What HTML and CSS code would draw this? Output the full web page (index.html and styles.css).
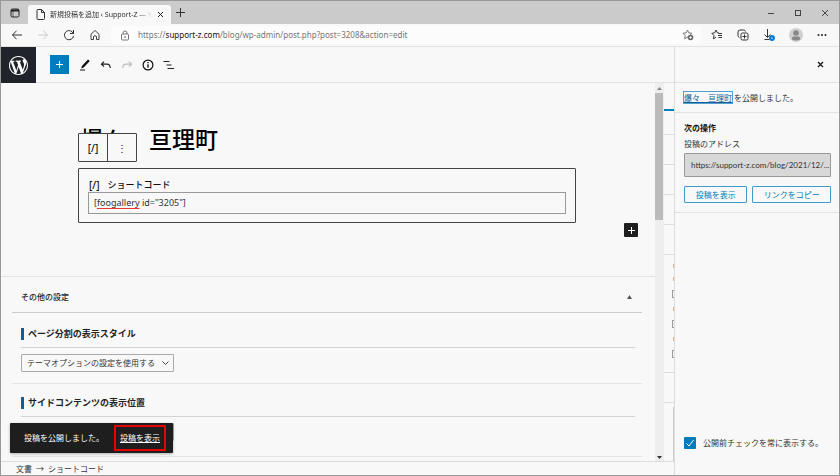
FILE: index.html
```html
<!DOCTYPE html>
<html lang="ja">
<head>
    <meta charset="UTF-8">
    <title>新規投稿を追加 ‹ Support-Z</title>
    <link rel="stylesheet" href="styles.css">
</head>
<body>
    <div class="window">
        <!-- Browser tabs -->
        <div class="tab-bar">
            <button class="icon-btn tab-menu" aria-label="タブ操作">
                <svg width="10" height="10" viewBox="0 0 10 10"><rect x="1" y="1" width="8" height="8" rx="1.5" fill="none" stroke="#222"/><path d="M1 2.5h8" stroke="#222" stroke-width="2"/><path d="M3 3v6" stroke="#222" stroke-width=".6"/></svg>
            </button>
            <div class="tab">
                <svg width="9" height="11" viewBox="0 0 9 11" fill="none" stroke="#333"><path d="M1 1.5q0-1 1-1h3.5l3 3v6q0 1-1 1H2q-1 0-1-1zM5.500 .5v3h3"/></svg>
                <span class="tab-title">新規投稿を追加 ‹ Support-Z — W</span>
                <button class="icon-btn" aria-label="タブを閉じる">
                    <svg width="7" height="7" viewBox="0 0 7 7" stroke="#222"><path d="M1 1l5 5M6 1L1 6"/></svg>
                </button>
            </div>
            <button class="icon-btn new-tab" aria-label="新しいタブ">
                <svg width="9" height="9" viewBox="0 0 9 9" stroke="#333"><path d="M4.500 0v9M0 4.500h9"/></svg>
            </button>
            <div class="window-controls">
                <button class="icon-btn" aria-label="最小化"><svg width="8" height="8" viewBox="0 0 8 8" stroke="#444"><path d="M1 4.500h6"/></svg></button>
                <button class="icon-btn" aria-label="最大化"><svg width="8" height="8" viewBox="0 0 8 8" stroke="#444" fill="none"><rect x="1.500" y="1.500" width="5" height="5"/></svg></button>
                <button class="icon-btn" aria-label="閉じる"><svg width="8" height="8" viewBox="0 0 8 8" stroke="#444"><path d="M1 1l6 6M7 1L1 7"/></svg></button>
            </div>
        </div>

        <!-- Address bar -->
        <div class="nav-bar">
            <div class="nav-buttons">
                <button class="icon-btn" aria-label="戻る"><svg width="12" height="12" viewBox="0 0 12 12" fill="none" stroke="#333"><path d="M11 6H1.500M5.500 1.800L1.500 6l4 4.200"/></svg></button>
                <button class="icon-btn" aria-label="進む"><svg width="12" height="12" viewBox="0 0 12 12" fill="none" stroke="#ccc"><path d="M1 6h9.500M6.500 1.800l4 4.200-4 4.200"/></svg></button>
                <button class="icon-btn" aria-label="更新"><svg width="12" height="12" viewBox="0 0 12 12" fill="none" stroke="#333"><path d="M10.500 5A4.600 4.600 0 1 0 10.600 6.800M10.500 1v3.500H7"/></svg></button>
                <button class="icon-btn" aria-label="ホーム"><svg width="12" height="12" viewBox="0 0 12 12" fill="none" stroke="#444"><path d="M2 5.200L6 1.500l4 3.700v5.300H7.500V8q0-1.300-1.500-1.300T4.500 8v2.500H2z" stroke-linejoin="round"/></svg></button>
            </div>
            <div class="address">
                <svg width="10" height="11" viewBox="0 0 10 11" fill="none" stroke="#777"><rect x="1.500" y="4" width="7" height="6" rx="1"/><path d="M3 4V3q0-2 2-2t2 2v1"/><circle cx="5" cy="7" r=".5"/></svg>
                <span class="url">https://<b>support-z.com</b>/blog/wp-admin/post.php?post=3208&amp;action=edit</span>
                <button class="icon-btn" aria-label="お気に入りに追加"><svg width="12" height="12" viewBox="0 0 12 12" fill="none" stroke="#777"><path d="M5.500 1l1.300 2.900 3.200.4-2.300 2.200.6 3.200-2.800-1.500-2.900 1.500.6-3.200L1 4.300l3.200-.4z"/><circle cx="8.500" cy="8.500" r="2.800" fill="#666" stroke="none"/><path d="M8.500 7v3M7 8.500h3" stroke="#fff" stroke-width=".8"/></svg></button>
            </div>
            <div class="nav-tools">
                <button class="icon-btn" aria-label="お気に入り"><svg width="12" height="12" viewBox="0 0 12 12" fill="none" stroke="#333"><path d="M8 4L6.400 3.800 5 1 3.700 3.900.8 4.300 3 6.500l-.6 3.300L5 8.300M7.500 4.500H11M7 6.500h4M7.500 8.500H11"/></svg></button>
                <button class="icon-btn" aria-label="コレクション"><svg width="12" height="12" viewBox="0 0 12 12" fill="none" stroke="#333"><rect x="4" y="4" width="7" height="7" rx="1.500"/><path d="M2.500 8.500Q1 8 1 6.500V3q0-2 2-2h3.500Q8.200 1 8.500 2.500M7.500 5.500v4M5.500 7.500h4"/></svg></button>
                <button class="icon-btn" aria-label="ダウンロード"><svg width="12" height="12" viewBox="0 0 12 12" fill="none" stroke="#333"><path d="M4.500 0v8M1.500 5.500l3 3 3-3M1.500 10.500h5"/><circle cx="9" cy="9" r="2.900" fill="#0078d4" stroke="none"/><circle cx="9" cy="9" r=".7" fill="#fff" stroke="none"/></svg></button>
                <button class="icon-btn" aria-label="プロフィール"><svg width="14" height="14" viewBox="0 0 14 14"><circle cx="7" cy="7" r="7" fill="#d0d0d0"/><circle cx="7" cy="5" r="2.800" fill="#888"/><path d="M2.800 11.500q0-3 2-3h4.400q2 0 2 3-4.200 2-8.400 0" fill="#888"/></svg></button>
                <button class="icon-btn" aria-label="設定など"><svg width="10" height="4" viewBox="0 0 10 4" fill="#222"><circle cx="1.500" cy="2" r="1"/><circle cx="5" cy="2" r="1"/><circle cx="8.500" cy="2" r="1"/></svg></button>
            </div>
        </div>

        <div class="page">
            <div class="editor">
                <header class="editor-header">
                    <a class="wp-logo" href="#" aria-label="WordPress">
                        <svg width="19" height="19" viewBox="0 0 20 20" fill="#fff"><path d="M20 10c0-5.510-4.490-10-10-10C4.480 0 0 4.490 0 10c0 5.520 4.480 10 10 10 5.510 0 10-4.480 10-10zM7.780 15.370L4.370 6.220c.55-.02 1.170-.08 1.170-.08.5-.06.44-1.130-.06-1.110 0 0-1.450.11-2.370.11-.18 0-.37 0-.58-.01C4.120 2.690 6.870 1.110 10 1.110c2.330 0 4.450.87 6.050 2.340-.68-.11-1.650.39-1.650 1.580 0 .74.45 1.360.9 2.100.35.61.55 1.360.55 2.460 0 1.490-1.400 5-1.400 5l-3.030-8.370c.54-.02.82-.17.82-.17.5-.05.44-1.250-.06-1.220 0 0-1.440.12-2.380.12-.87 0-2.330-.12-2.330-.12-.5-.03-.56 1.200-.06 1.220l.92.08 1.260 3.410zM17.410 10c.24-.64.74-1.870.43-4.250.7 1.290 1.050 2.710 1.050 4.250 0 3.290-1.730 6.240-4.400 7.780.97-2.590 1.940-5.200 2.920-7.780zM6.100 18.090C3.120 16.650 1.110 13.530 1.110 10c0-1.300.23-2.480.72-3.590C3.250 10.300 4.670 14.200 6.100 18.090zm4.030-6.630l2.580 6.980c-.86.29-1.760.45-2.710.45-.79 0-1.570-.11-2.290-.33.810-2.380 1.620-4.740 2.420-7.100z"/></svg>
                    </a>
                    <div class="editor-tools">
                        <button class="icon-btn add-btn" aria-label="ブロックを追加"><svg width="7" height="7" viewBox="0 0 7 7" stroke="#fff"><path d="M3.500 0v7M0 3.500h7"/></svg></button>
                        <button class="icon-btn" aria-label="編集"><svg width="12" height="12" viewBox="0 0 12 12" fill="#111"><path d="M9 .5L10.800 2 4.700 8.600l-2.500.8.7-2.500zM1 10.500h5v1H1z"/></svg></button>
                        <button class="icon-btn" aria-label="元に戻す"><svg width="12" height="12" viewBox="0 0 12 12" fill="none" stroke="#222" stroke-width="1.200"><path d="M4 2.700L1.500 5.200 4 7.700M1.500 5.200H7q3 0 3.300 3.800"/></svg></button>
                        <button class="icon-btn" aria-label="やり直す"><svg width="12" height="12" viewBox="0 0 12 12" fill="none" stroke="#bbb" stroke-width="1.200"><path d="M8 2.700l2.500 2.500L8 7.700M10.500 5.200H5Q2 5.200 1.700 9"/></svg></button>
                        <button class="icon-btn" aria-label="詳細"><svg width="12" height="12" viewBox="0 0 12 12" fill="none" stroke="#111"><circle cx="6" cy="6" r="4.900" stroke-width="1.200"/><path d="M6 5.200v3.600M6 3v1.200" stroke-width="1.300"/></svg></button>
                        <button class="icon-btn" aria-label="リスト表示"><svg width="12" height="12" viewBox="0 0 12 12" stroke="#222"><path d="M.5 2.500h6M3.500 6h5M4.500 9.500h6.500" stroke-width="1.200"/></svg></button>
                    </div>
                </header>

                <div class="editor-main">
                    <main class="content">
                        <div class="canvas">
                            <h1 class="post-title">爆々　亘理町</h1>
                            <div class="block">
                                <div class="block-toolbar">
                                    <button class="toolbar-btn">[/]</button>
                                    <button class="toolbar-btn" aria-label="オプション">⋮</button>
                                </div>
                                <label class="block-label" for="shortcode"><span>[/]</span>ショートコード</label>
                                <div class="shortcode" id="shortcode" role="textbox" contenteditable="true" spellcheck="false">[<span class="misspelled">foogallery</span> id="3205"]</div>
                            </div>
                            <button class="icon-btn inserter" aria-label="ブロックを追加"><svg width="9" height="9" viewBox="0 0 9 9" stroke="#fff"><path d="M4.500 1v7M1 4.500h7"/></svg></button>
                        </div>

                        <div class="metabox">
                            <div class="metabox-header">
                                <h2>その他の設定</h2>
                                <button class="icon-btn" aria-label="パネルを切り替え"><svg width="5" height="4" viewBox="0 0 5 4" fill="#555"><path d="M2.500 0L5 4H0z"/></svg></button>
                            </div>
                            <section class="option">
                                <h3><label for="page-style">ページ分割の表示スタイル</label></h3>
                                <div class="select-wrap">
                                    <select id="page-style"><option>テーマオプションの設定を使用する</option></select>
                                </div>
                            </section>
                            <section class="option">
                                <h3><label for="side-position">サイドコンテンツの表示位置</label></h3>
                                <div class="select-wrap">
                                    <select id="side-position"><option>テーマオプションの設定を使用する</option></select>
                                </div>
                            </section>
                        </div>
                    </main>

                    <div class="scrollbar">
                        <svg width="5" height="4" viewBox="0 0 5 4" fill="#888"><path d="M2.500 0L5 3H0z"/></svg>
                        <div class="scroll-track"><div class="scroll-thumb"></div></div>
                        <svg width="5" height="4" viewBox="0 0 5 4" fill="#333"><path d="M2.500 4L5 1H0z"/></svg>
                    </div>

                    <!-- Settings sidebar, mostly covered by the publish panel -->
                    <div class="settings">
                        <div class="settings-row settings-tab"></div>
                        <div class="settings-row settings-short"></div>
                        <div class="settings-row"></div>
                        <div class="settings-row"></div>
                        <div class="settings-row"></div>
                        <div class="settings-row"></div>
                        <div class="settings-row settings-list">
                            <i class="link-edge"></i>
                            <i class="link-edge"></i>
                            <i class="box-edge"></i>
                            <i class="link-edge"></i>
                            <i class="box-edge"></i>
                            <i class="link-edge"></i>
                            <i class="box-edge"></i>
                        </div>
                        <div class="settings-row"></div>
                        <div class="settings-rest"></div>
                    </div>
                </div>

                <footer class="breadcrumb">
                    <span>文書</span>
                    <span>→</span>
                    <span>ショートコード</span>
                </footer>

                <div class="snackbar">
                    <span>投稿を公開しました。</span>
                    <a href="#">投稿を表示</a>
                </div>
            </div>

            <aside class="publish-panel">
                <div class="panel-header">
                    <button class="icon-btn" aria-label="パネルを閉じる"><svg width="7" height="7" viewBox="0 0 7 7" stroke="#111" stroke-width="1.200"><path d="M1 1l5 5M6 1L1 6"/></svg></button>
                </div>
                <p class="published"><a href="#">爆々　亘理町</a>を公開しました。</p>
                <div class="next-steps">
                    <h2>次の操作</h2>
                    <label for="post-url">投稿のアドレス</label>
                    <input type="text" id="post-url" value="https://support-z.com/blog/2021/12/..." readonly>
                    <div class="panel-buttons">
                        <button class="btn view-btn">投稿を表示</button>
                        <button class="btn copy-btn">リンクをコピー</button>
                    </div>
                </div>
                <div class="panel-footer">
                    <input type="checkbox" id="precheck" checked>
                    <label for="precheck">公開前チェックを常に表示する。</label>
                </div>
            </aside>
        </div>
    </div>
</body>
</html>
```
FILE: styles.css
```css
* {
    box-sizing: border-box;
}
body {
    margin: 0;
    font-family: 'Noto Sans', 'Noto Sans CJK JP', sans-serif;
    font-size: 8px;
    line-height: 12px;
    color: #333;
    background-color: #f8f8f8;
}
h1, h2, h3, p {
    margin: 0;
}
button, input, select {
    font-family: inherit;
    font-size: inherit;
    line-height: inherit;
    color: inherit;
    margin: 0;
}
svg {
    display: block;
    flex-shrink: 0;
}
.window {
    display: flex;
    flex-direction: column;
    height: 100vh;
    border: 1px solid #999;
    overflow: hidden;
}
.icon-btn {
    display: flex;
    align-items: center;
    justify-content: center;
    flex-shrink: 0;
    padding: 0;
    border: none;
    background: none;
}

/* Browser chrome */
.tab-bar {
    display: flex;
    align-items: center;
    height: 23px;
    flex-shrink: 0;
    background-color: #cbcbcb;
}
.tab-menu {
    width: 27px;
}
.tab {
    display: flex;
    align-items: center;
    align-self: flex-end;
    gap: 5px;
    width: 143px;
    height: 19px;
    padding: 0 7px 0 8px;
    border-radius: 3px 3px 0 0;
    background-color: #f8f8f8;
}
.tab-title {
    flex: 1;
    min-width: 0;
    font-size: 7px;
    white-space: nowrap;
    -webkit-mask-image: linear-gradient(to right, #000 85%, transparent);
    mask-image: linear-gradient(to right, #000 85%, transparent);
}
.new-tab {
    width: 19px;
}
.window-controls {
    display: flex;
    gap: 19px;
    margin-left: auto;
    padding-right: 10px;
}
.nav-bar {
    display: flex;
    align-items: center;
    height: 23px;
    flex-shrink: 0;
    border-bottom: 1px solid #e2e2e2;
}
.nav-buttons {
    display: flex;
    gap: 14px;
    padding: 0 10px;
}
.address {
    display: flex;
    align-items: center;
    gap: 8px;
    flex: 1;
    height: 18px;
    padding: 0 7px 0 9px;
    border-radius: 3px;
    background-color: #fcfcfc;
}
.url {
    flex: 1;
    color: #777;
    white-space: nowrap;
}
.url b {
    font-weight: 400;
    color: #111;
}
.nav-tools {
    display: flex;
    align-items: center;
    gap: 14px;
    padding: 0 12px 0 10px;
}

/* Editor */
.page {
    display: flex;
    flex: 1;
    min-height: 0;
}
.editor {
    position: relative;
    display: flex;
    flex-direction: column;
    flex: 1;
    min-width: 0;
}
.editor-header {
    display: flex;
    height: 36px;
    flex-shrink: 0;
    border-bottom: 1px solid #e2e2e2;
}
.wp-logo {
    display: flex;
    align-items: center;
    justify-content: center;
    width: 35px;
    height: 36px;
    background-color: #20242a;
}
.editor-tools {
    display: flex;
    align-items: center;
    gap: 9px;
    padding-left: 14px;
}
.editor-tools .icon-btn {
    width: 12px;
    height: 19px;
}
.editor-tools .add-btn {
    width: 19px;
    margin-right: 1px;
    background-color: #007cba;
}
.editor-main {
    display: flex;
    flex: 1;
    min-height: 0;
}
.content {
    flex: 1;
    min-width: 0;
    overflow: hidden;
}
.canvas {
    padding: 38px 17px 39px 77px;
    border-bottom: 1px solid #e2e2e2;
}
.post-title {
    padding-left: 2px;
    font-size: 23px;
    line-height: 36px;
    font-weight: 500;
    color: #000;
}
.block {
    position: relative;
    margin: 11px 62px 0 0;
    padding: 10px 9px 8px;
    border: 1px solid #444;
    border-radius: 1px;
}
.block-toolbar {
    position: absolute;
    left: -1px;
    bottom: calc(100% + 7px);
    display: flex;
    border: 1px solid #444;
    border-radius: 1px;
    background-color: #f8f8f8;
}
.toolbar-btn {
    width: 28px;
    height: 27px;
    padding: 0;
    border: none;
    background: none;
    font-size: 10px;
    font-weight: 500;
    color: #111;
}
.toolbar-btn + .toolbar-btn {
    width: 29px;
    border-left: 1px solid #444;
}
.block-label {
    display: flex;
    gap: 8px;
    padding-left: 1px;
    font-size: 9px;
    font-weight: 500;
    color: #111;
}
.block-label span {
    font-size: 10px;
}
.shortcode {
    margin-top: 1px;
    padding: 4px 5px;
    border: 1px solid #999;
    font-size: 9px;
}
.misspelled {
    text-decoration: underline 1px #e33;
    text-underline-offset: 2px;
}
.inserter {
    width: 14px;
    height: 14px;
    margin-left: auto;
    border-radius: 1px;
    background-color: #1e1e1e;
}

/* Meta box */
.metabox {
    padding: 0 13px 0 11px;
}
.metabox-header {
    display: flex;
    align-items: center;
    justify-content: space-between;
    height: 36px;
    margin-bottom: 2px;
    padding: 4px 10px 0 9px;
    border-bottom: 1px solid #ccc;
}
.metabox-header h2 {
    font-size: 8px;
    font-weight: 500;
    color: #222;
}
.option {
    padding: 13px 7px 11px 9px;
    border-bottom: 1px solid #e5e5e5;
}
.option:last-child {
    padding-bottom: 15px;
}
.option h3 {
    padding-bottom: 7px;
    border-bottom: 1px solid #d4d4d4;
    font-size: 9px;
    font-weight: 600;
    color: #222;
}
.option h3 label {
    display: block;
    padding-left: 4px;
    border-left: 3px solid #135e96;
}
.select-wrap {
    display: flex;
    padding-top: 6px;
}
.select-wrap select {
    height: 18px;
    padding: 0 18px 0 5px;
    border: 1px solid #aaa;
    border-radius: 1px;
    appearance: none;
    background: url("data:image/svg+xml,%3Csvg xmlns='http://www.w3.org/2000/svg' width='7' height='5'%3E%3Cpath d='M.5.5l3 3 3-3' fill='none' stroke='%23444'/%3E%3C/svg%3E") no-repeat right 4px center;
}
.scrollbar {
    display: flex;
    flex-direction: column;
    align-items: center;
    width: 9px;
    padding: 4px 0 2px;
    background-color: #eee;
}
.scroll-track {
    flex: 1;
    align-self: stretch;
    padding-top: 2px;
}
.scroll-thumb {
    height: 35%;
    margin-right: 1px;
    background-color: #bbb;
}
.settings {
    display: flex;
    flex-direction: column;
    width: 10px;
}
.settings-row {
    height: 30px;
    flex-shrink: 0;
    border-bottom: 1px solid #ddd;
}
.settings-tab {
    height: 28px;
    border-bottom: 2px solid #007cba;
}
.settings-short {
    height: 24px;
}
.settings-list {
    display: flex;
    flex-direction: column;
    align-items: flex-end;
    gap: 9px;
    height: 118px;
    padding-top: 9px;
}
.link-edge {
    width: 1px;
    height: 4px;
    background-color: #d8b48c;
}
.box-edge {
    width: 2px;
    height: 8px;
    border: 1px solid #999;
    border-right: none;
}
.settings-rest {
    flex: 1;
    margin: 4px 0 0 9px;
    border-left: 1px solid #ccc;
}
.breadcrumb {
    display: flex;
    gap: 4px;
    height: 14px;
    flex-shrink: 0;
    padding: 1px 15px;
    border-top: 1px solid #ddd;
}
.snackbar {
    position: absolute;
    left: 9px;
    bottom: 22px;
    display: flex;
    align-items: center;
    justify-content: space-between;
    width: 163px;
    height: 30px;
    padding: 0 7px 0 14px;
    border-radius: 1px;
    background-color: #1e1e1e;
    color: #fff;
    box-shadow: 0 1px 3px rgba(0,0,0,0.3);
}
.snackbar a {
    padding: 5px 4px;
    border: 2px solid #e60000;
    color: #fff;
}

/* Publish panel */
.publish-panel {
    display: flex;
    flex-direction: column;
    width: 165px;
    flex-shrink: 0;
    border-left: 1px solid #ddd;
}
.panel-header {
    display: flex;
    align-items: center;
    justify-content: flex-end;
    height: 36px;
    padding-right: 15px;
    border-bottom: 1px solid #e2e2e2;
}
.published {
    padding: 9px;
    border-bottom: 1px solid #e2e2e2;
    line-height: 11px;
}
.published a {
    margin-right: 2px;
    outline: 1px solid #4f9fd0;
    color: #135e96;
}
.next-steps {
    display: flex;
    flex-direction: column;
    padding: 9px 8px 9px 9px;
    border-bottom: 1px solid #e2e2e2;
}
.next-steps h2 {
    margin-bottom: 4px;
    font-size: 8px;
    font-weight: 700;
    color: #111;
}
.next-steps input {
    width: 100%;
    height: 24px;
    margin-top: 3px;
    padding: 0 0 0 6px;
    border: 1px solid #999;
    border-radius: 1px;
    background-color: #d8d8d8;
    font-family: Lato, sans-serif;
}
.panel-buttons {
    display: flex;
    gap: 5px;
    margin-top: 9px;
}
.btn {
    height: 17px;
    padding: 0;
    border: 1px solid #3f9bc9;
    border-radius: 1px;
    background: none;
    color: #007cba;
}
.view-btn {
    flex: 4;
}
.copy-btn {
    flex: 5;
}
.panel-footer {
    display: flex;
    align-items: center;
    gap: 7px;
    margin-top: auto;
    padding: 0 9px 26px;
}
.panel-footer input {
    width: 12px;
    height: 12px;
    appearance: none;
    border-radius: 1px;
    background: #007cba url("data:image/svg+xml,%3Csvg xmlns='http://www.w3.org/2000/svg' width='12' height='12'%3E%3Cpath d='M2.500 6.500l2.500 2.500 4.500-6' fill='none' stroke='white'/%3E%3C/svg%3E") no-repeat center;
}
```
